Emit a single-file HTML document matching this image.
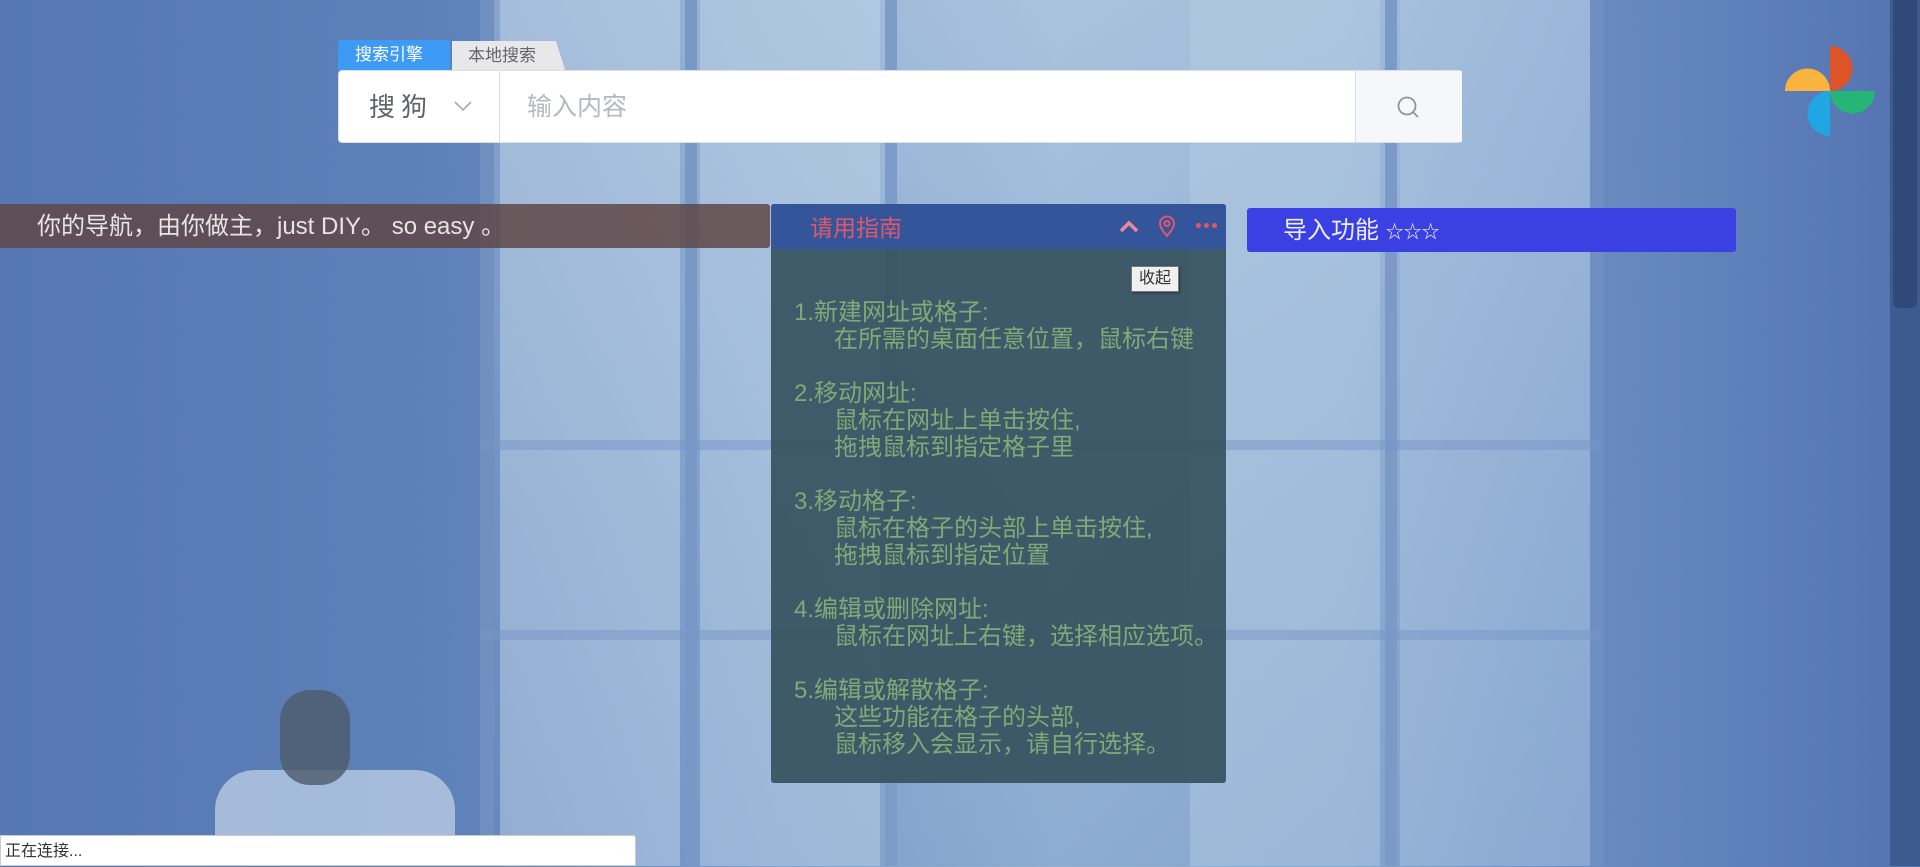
<!DOCTYPE html>
<html><head><meta charset="utf-8"><style>
*{margin:0;padding:0;box-sizing:border-box}
body{width:1920px;height:866px;overflow:hidden;position:relative;font-family:"Liberation Sans","Noto Sans CJK SC",sans-serif;
background:linear-gradient(90deg,#5677b2 0%,#5f82ba 25%,#7f9fcb 40%,#93b2d4 55%,#8aa9d0 70%,#6a8cc2 82%,#5273b0 100%);}
.win{position:absolute;opacity:.45}
.abs{position:absolute}
</style></head><body>
<div class="abs" style="left:480px;top:0;width:1120px;height:866px;background:linear-gradient(180deg,rgba(210,225,238,.35),rgba(160,190,220,.25) 60%,rgba(120,150,200,.2));"></div>
<div class="win" style="left:500px;top:0;width:180px;height:866px;background:#c8dbea"></div>
<div class="win" style="left:700px;top:0;width:180px;height:866px;background:#c2d7e8"></div>
<div class="win" style="left:1190px;top:0;width:190px;height:866px;background:#b6cfe4"></div>
<div class="win" style="left:1400px;top:0;width:190px;height:866px;background:#adc8e2"></div>
<div class="abs" style="left:480px;top:0;width:14px;height:866px;background:#7090c2"></div>
<div class="abs" style="left:685px;top:0;width:12px;height:866px;background:#7898c6"></div>
<div class="abs" style="left:885px;top:0;width:12px;height:866px;background:#7e9cc8"></div>
<div class="abs" style="left:1385px;top:0;width:12px;height:866px;background:#7c9ac7"></div>
<div class="abs" style="left:1590px;top:0;width:14px;height:866px;background:#6f8ec2"></div>
<div class="abs" style="left:480px;top:440px;width:1120px;height:10px;background:rgba(120,150,200,.5)"></div>
<div class="abs" style="left:480px;top:630px;width:1120px;height:10px;background:rgba(120,150,200,.5)"></div>
<!-- plant hint -->
<div class="abs" style="left:215px;top:770px;width:240px;height:96px;background:#b8cbe2;border-radius:40px 40px 0 0;opacity:.8"></div>
<div class="abs" style="left:280px;top:690px;width:70px;height:95px;background:#4d5a6a;border-radius:30px;opacity:.8"></div>
<!-- scrollbar -->
<div class="abs" style="left:1890px;top:0;width:30px;height:866px;background:#3d5b8e"></div>
<div class="abs" style="left:1893px;top:0;width:24px;height:308px;background:#2f4a78;border-radius:0 0 6px 6px"></div>
<!-- tabs -->
<div class="abs" style="left:338px;top:40px;width:112px;height:30px;background:#3d9af5;color:#fff;font-size:17px;line-height:30px;padding-left:17px;border-radius:3px 3px 0 0">搜索引擎</div>
<div class="abs" style="left:452px;top:41px;width:113px;height:29px;background:#e8e8ea;color:#666;font-size:17px;line-height:29px;padding-left:16px;clip-path:polygon(0 0,92% 0,100% 100%,0 100%)">本地搜索</div>
<!-- search -->
<div class="abs" style="left:338px;top:70px;width:1124px;height:73px;background:#fff;border-radius:4px;border:1px solid #dcdfe6">
 <div class="abs" style="left:30px;top:1px;line-height:71px;font-size:26px;color:#606266;letter-spacing:6px">搜狗</div>
 <svg class="abs" style="left:115px;top:28px" width="18" height="14"><path d="M1 3 L9 11 L17 3" fill="none" stroke="#aaa" stroke-width="1.6"/></svg>
 <div class="abs" style="left:160px;top:0;width:1px;height:71px;background:#dcdfe6"></div>
 <div class="abs" style="left:188px;top:1px;line-height:71px;font-size:25px;color:#b5b8be">输入内容</div>
 <div class="abs" style="left:1016px;top:0;width:107px;height:71px;background:#f5f7fa;border-left:1px solid #dcdfe6"></div>
 <svg class="abs" style="left:1057px;top:24px" width="26" height="26"><circle cx="11" cy="11" r="8.5" fill="none" stroke="#909399" stroke-width="1.8"/><path d="M17 17 L22 22" stroke="#909399" stroke-width="1.8"/></svg>
</div>
<!-- logo -->
<svg class="abs" style="left:1784px;top:45px" width="92" height="92">
 <path d="M46 46 L46 1 A22 22 0 0 1 46 46Z" fill="#dc5428"/>
 <path d="M46 46 L1 46 A22 22 0 0 1 46 46Z" fill="#fbb33f"/>
 <path d="M46 46 L91 46 A22 22 0 0 1 46 46Z" fill="#25b577"/>
 <path d="M46 46 L46 91 A22 22 0 0 1 46 46Z" fill="#1fa6e3"/>
</svg>
<!-- left bar -->
<div class="abs" style="left:0;top:204px;width:770px;height:44px;background:rgba(95,70,70,.85);border-radius:0 3px 3px 0;color:#e8e4e4;font-size:24px;line-height:46px;padding-left:37px">你的导航，由你做主，just DIY。 so easy 。</div>
<!-- panel -->
<div class="abs" style="left:771px;top:204px;width:455px;height:579px;background:rgba(55,82,95,.93);border-radius:3px">
 <div style="height:45px;background:#34559a;border-radius:3px 3px 0 0;position:relative">
  <div class="abs" style="left:39px;top:2px;line-height:45px;font-size:23px;color:#e0566a">请用指南</div>
  <svg class="abs" style="left:347px;top:15px" width="22" height="16"><path d="M3 12 L11 4 L19 12" fill="none" stroke="#e88a9a" stroke-width="3.5"/></svg>
  <svg class="abs" style="left:387px;top:11px" width="18" height="24"><path d="M9 21 C3 14 2 11 2 8.5 A7 7 0 0 1 16 8.5 C16 11 15 14 9 21Z" fill="none" stroke="#e0566a" stroke-width="2"/><circle cx="9" cy="8.5" r="2.5" fill="none" stroke="#e0566a" stroke-width="2"/></svg>
  <div class="abs" style="left:425px;top:19px;width:5px;height:5px;border-radius:50%;background:#e0566a;box-shadow:8px 0 #e0566a,16px 0 #e0566a"></div>
 </div>
 <div style="color:#80a978;font-size:24px;line-height:27px;padding:50px 0 0 23px;white-space:pre">1.新建网址或格子:
      在所需的桌面任意位置，鼠标右键

2.移动网址:
      鼠标在网址上单击按住,
      拖拽鼠标到指定格子里

3.移动格子:
      鼠标在格子的头部上单击按住,
      拖拽鼠标到指定位置

4.编辑或删除网址:
      鼠标在网址上右键，选择相应选项。

5.编辑或解散格子:
      这些功能在格子的头部,
      鼠标移入会显示，请自行选择。</div>
</div>
<div class="abs" style="left:1131px;top:266px;width:48px;height:26px;background:#f0f0f0;border:1px solid #777;font-size:16px;line-height:24px;text-align:center;color:#333;box-shadow:1px 1px 2px rgba(0,0,0,.4)">收起</div>
<!-- import -->
<div class="abs" style="left:1247px;top:208px;width:489px;height:44px;background:#3a40e2;border-radius:3px;color:#eef;font-size:24px;line-height:46px;padding-left:36px">导入功能 <span style="font-size:18px">☆☆☆</span></div>
<!-- status -->
<div class="abs" style="left:0;top:835px;width:636px;height:31px;background:#fff;border:1px solid #ccc;border-radius:0 3px 0 0;font-size:16px;line-height:31px;padding-left:4px;color:#333">正在连接...</div>
</body></html>
